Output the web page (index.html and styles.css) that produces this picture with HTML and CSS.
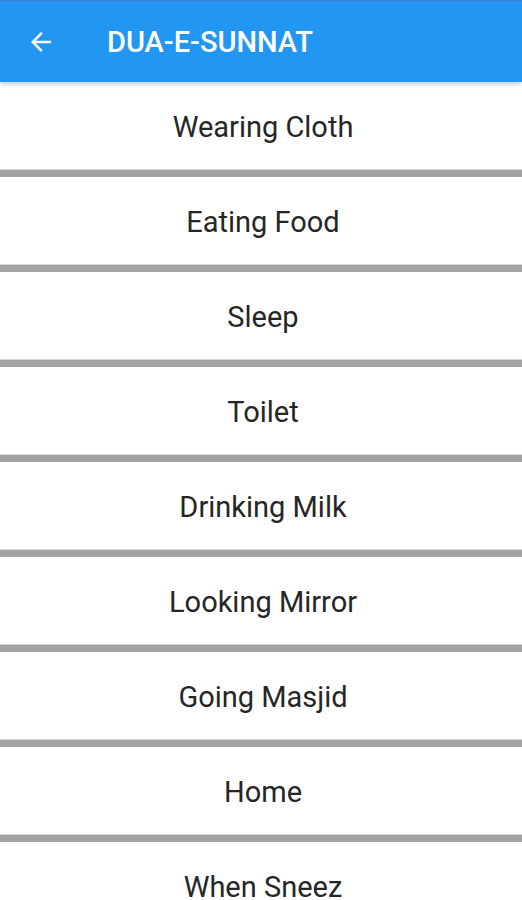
FILE: index.html
```html
<!DOCTYPE html>
<html lang="en">
<head>
    <meta charset="UTF-8">
    <meta name="viewport" content="width=device-width, initial-scale=1.0">
    <title>Dua-e-Sunnat</title>
    <link rel="stylesheet" href="styles.css">
</head>
<body>
    <header class="app-bar">
        <button class="back-btn" aria-label="Back">
            <svg width="24" height="24" viewBox="0 0 24 24">
                <path d="M20 11H7.83l5.59-5.59L12 4l-8 8 8 8 1.41-1.41L7.83 13H20v-2z" fill="#fff"/>
            </svg>
        </button>
        <h1 class="title">DUA-E-SUNNAT</h1>
    </header>

    <ul class="dua-list">
        <li class="dua-item">Wearing Cloth</li>
        <li class="dua-item">Eating Food</li>
        <li class="dua-item">Sleep</li>
        <li class="dua-item">Toilet</li>
        <li class="dua-item">Drinking Milk</li>
        <li class="dua-item">Looking Mirror</li>
        <li class="dua-item">Going Masjid</li>
        <li class="dua-item">Home</li>
        <li class="dua-item">When Sneez</li>
    </ul>
</body>
</html>
```

FILE: styles.css
```css
body {
    margin: 0;
    font-family: Roboto, "Noto Sans", sans-serif;
    background-color: #fff;
    overflow: hidden;
}
.app-bar {
    position: relative;
    z-index: 1;
    height: 81px;
    background-color: #2196f3;
    border-top: 1px solid #3b7fcf;
    display: flex;
    align-items: center;
    box-shadow: 0 2px 5px rgba(0, 0, 0, 0.22);
}
.back-btn {
    background: none;
    border: none;
    padding: 0;
    margin-left: 26px;
    width: 30px;
    height: 30px;
    display: flex;
    align-items: center;
    justify-content: center;
}
.back-btn svg {
    width: 30px;
    height: 30px;
}
.title {
    margin: 0 0 0 51px;
    color: #fff;
    font-size: 29px;
    font-weight: 500;
}
.dua-list {
    list-style: none;
    margin: 0;
    padding: 0;
}
.dua-item {
    box-sizing: border-box;
    height: 95px;
    padding: 2px 0 0 4px;
    display: flex;
    align-items: center;
    justify-content: center;
    font-size: 29px;
    color: #262626;
    background-color: #fff;
    border-bottom: 7px solid #a3a3a3;
    box-shadow: inset 0 -1px 0 #d8d8d8;
}
```
